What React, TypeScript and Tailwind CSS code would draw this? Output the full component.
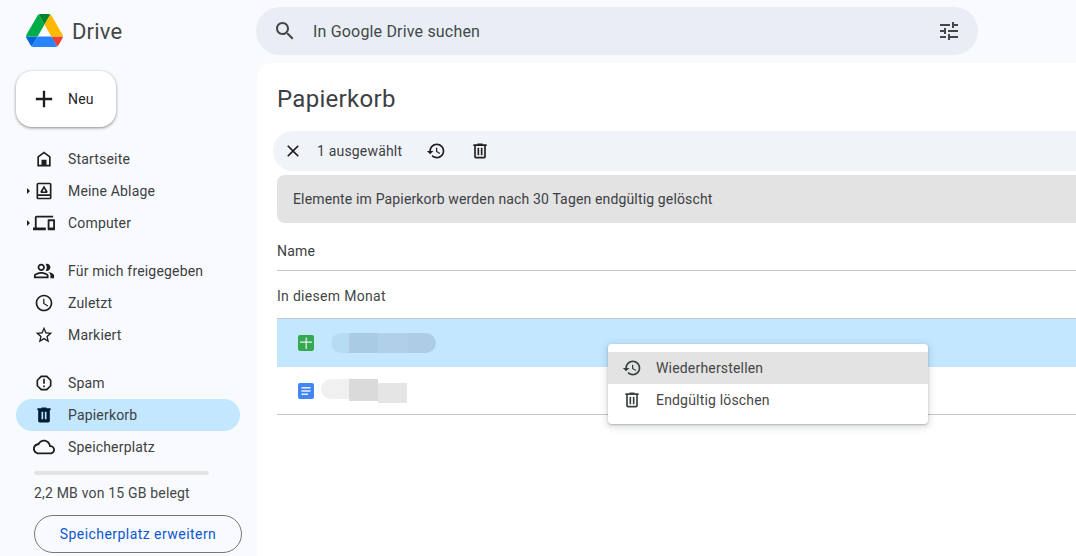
const icons = {
  search:
    "M15.5 14h-.79l-.28-.27C15.41 12.59 16 11.11 16 9.5 16 5.91 13.09 3 9.5 3S3 5.91 3 9.5 5.91 16 9.5 16c1.61 0 3.09-.59 4.23-1.57l.27.28v.79l5 4.99L20.49 19l-4.99-5zm-6 0C7.01 14 5 11.99 5 9.5S7.01 5 9.5 5 14 7.01 14 9.5 11.99 14 9.5 14z",
  tune: "M3 17v2h6v-2H3zM3 5v2h10V5H3zm10 16v-2h8v-2h-8v-2h-2v6h2zM7 9v2H3v2h4v2h2V9H7zm14 4v-2H11v2h10zm-6-4h2V7h4V5h-4V3h-2v6z",
  restore:
    "M13 3c-4.97 0-9 4.03-9 9H1l3.89 3.89.07.14L9 12H6c0-3.87 3.13-7 7-7s7 3.13 7 7-3.13 7-7 7c-1.93 0-3.68-.79-4.94-2.06l-1.42 1.42C8.27 19.99 10.51 21 13 21c4.97 0 9-4.03 9-9s-4.03-9-9-9zm-1 5v5l4.28 2.54.72-1.21-3.5-2.08V8H12z",
  trash:
    "M15 4V3H9v1H4v2h1v13c0 1.1.9 2 2 2h10c1.1 0 2-.9 2-2V6h1V4h-5zm2 15H7V6h10v13zM9 8h2v9H9zm4 0h2v9h-2z",
  trashFilled:
    "M15 4V3H9v1H4v2h1v13c0 1.1.9 2 2 2h10c1.1 0 2-.9 2-2V6h1V4h-5zm-4 13H9V8h2v9zm4 0h-2V8h2v9z",
  close:
    "M19 6.41L17.59 5 12 10.59 6.41 5 5 6.41 10.59 12 5 17.59 6.41 19 12 13.41 17.59 19 19 17.59 13.41 12z",
  add: "M19 13h-6v6h-2v-6H5v-2h6V5h2v6h6v2z",
  home: "M12 3L4 9v12h16V9l-8-6zm6 16H6v-9l6-4.5 6 4.5v9zM9 13h6v6H9z",
  drive:
    "M5 2h14a2 2 0 0 1 2 2v16a2 2 0 0 1-2 2H5a2 2 0 0 1-2-2V4a2 2 0 0 1 2-2zm0 2v12h14V4H5zm0 14v2h14v-2H5zM12 5.5l4.5 7.5-.9 1.5H8.4l-.9-1.5L12 5.5zm0 3.5-1.700 3.500h3.400L12 9z",
  devices:
    "M4 6h18V4H4c-1.1 0-2 .9-2 2v11H0v3h14v-3H4V6zm19 2h-6c-.55 0-1 .45-1 1v10c0 .55.45 1 1 1h6c.55 0 1-.45 1-1V9c0-.55-.45-1-1-1zm-1 9h-4v-7h4v7z",
  people:
    "M16.67 13.13C18.04 14.06 19 15.32 19 17v3h4v-3c0-2.18-3.57-3.47-6.33-3.87zM15 12c2.21 0 4-1.79 4-4s-1.79-4-4-4c-.47 0-.91.1-1.33.24C14.5 5.27 15 6.58 15 8s-.5 2.73-1.33 3.76c.42.14.86.24 1.33.24zM9 12c2.21 0 4-1.79 4-4s-1.79-4-4-4-4 1.79-4 4 1.79 4 4 4zm0-6c1.1 0 2 .9 2 2s-.9 2-2 2-2-.9-2-2 .9-2 2-2zM9 13c-2.67 0-8 1.34-8 4v3h16v-3c0-2.66-5.33-4-8-4zm6 5H3v-.99C3.2 16.29 6.3 15 9 15s5.8 1.29 6 2v1z",
  clock:
    "M11.99 2C6.47 2 2 6.48 2 12s4.47 10 9.99 10C17.52 22 22 17.52 22 12S17.52 2 11.990 2zM12 20c-4.42 0-8-3.58-8-8s3.58-8 8-8 8 3.58 8 8-3.58 8-8 8zm.5-13H11v6l5.25 3.15.75-1.23-4.500-2.67z",
  star: "M22 9.24l-7.19-.62L12 2 9.19 8.63 2 9.24l5.46 4.73L5.82 21 12 17.27 18.18 21l-1.63-7.03L22 9.24zM12 15.400l-3.76 2.27 1-4.28-3.32-2.88 4.38-.38L12 6.100l1.71 4.04 4.38.38-3.32 2.88 1 4.28L12 15.400z",
  spam: "M15.73 3H8.27L3 8.27v7.46L8.27 21h7.46L21 15.73V8.27L15.730 3zM19 14.900L14.900 19H9.100L5 14.900V9.100L9.100 5h5.800L19 9.100v5.800zM11 15h2v2h-2zm0-8h2v6h-2z",
  cloud:
    "M19.35 10.04C18.67 6.59 15.64 4 12 4 9.11 4 6.6 5.64 5.35 8.04 2.34 8.36 0 10.91 0 14c0 3.31 2.69 6 6 6h13c2.76 0 5-2.24 5-5 0-2.64-2.05-4.78-4.65-4.960zM19 18H6c-2.21 0-4-1.79-4-4 0-2.05 1.53-3.76 3.56-3.97l1.07-.11.5-.95C8.08 7.14 9.94 6 12 6c2.62 0 4.88 1.86 5.39 4.43l.3 1.5 1.53.11c1.56.1 2.78 1.41 2.78 2.96 0 1.65-1.35 3-3 3z",
};

function Icon({ d, className }: { d: string; className?: string }) {
  return (
    <svg viewBox="0 0 24 24" fill="currentColor" className={className}>
      <path d={d} />
    </svg>
  );
}

function DriveLogo() {
  return (
    <svg viewBox="0 0 87.3 78" className="h-[33px] w-[37px]">
      <path d="m6.6 66.85 3.85 6.65c.8 1.4 1.95 2.5 3.3 3.3l13.75-23.8h-27.5c0 1.55.4 3.1 1.2 4.5z" fill="#0066da" />
      <path d="m43.65 25-13.75-23.8c-1.35.8-2.5 1.9-3.3 3.3l-25.4 44a9.06 9.06 0 0 0 -1.2 4.5h27.5z" fill="#00ac47" />
      <path d="m73.55 76.8c1.35-.8 2.5-1.9 3.3-3.3l1.6-2.75 7.65-13.25c.8-1.4 1.2-2.95 1.2-4.5h-27.502l5.852 11.5z" fill="#ea4335" />
      <path d="m43.65 25 13.75-23.8c-1.35-.8-2.9-1.2-4.5-1.2h-18.5c-1.6 0-3.15.45-4.5 1.2z" fill="#00832d" />
      <path d="m59.8 53h-32.3l-13.75 23.8c1.35.8 2.9 1.2 4.5 1.2h50.8c1.6 0 3.15-.45 4.5-1.2z" fill="#2684fc" />
      <path d="m73.4 26.5-12.7-22c-.8-1.4-1.95-2.5-3.3-3.3l-13.75 23.8 16.15 28h27.45c0-1.55-.4-3.1-1.2-4.5z" fill="#ffba00" />
    </svg>
  );
}

function NavItem({
  icon,
  label,
  arrow,
  active,
  wide,
}: {
  icon: string;
  label: string;
  arrow?: boolean;
  active?: boolean;
  wide?: boolean;
}) {
  return (
    <div
      className={`flex h-8 w-[224px] items-center rounded-full ${active ? "bg-[#c2e7ff] text-[#001d35]" : "text-[#1f1f1f]"}`}
    >
      <div className="flex w-[14px] shrink-0 justify-end">
        {arrow ? (
          <span className="h-0 w-0 border-y-[3px] border-l-[3px] border-y-transparent border-l-[#1f1f1f]" />
        ) : null}
      </div>
      <div className="flex w-[28px] shrink-0 justify-center">
        <Icon d={icon} className={wide ? "h-[22px] w-[22px]" : "h-5 w-5"} />
      </div>
      <span className="ml-[10px] text-sm text-[#3c4043]">{label}</span>
    </div>
  );
}

function Sidebar() {
  return (
    <aside className="flex w-[257px] shrink-0 flex-col">
      <div className="flex h-[63px] items-center pb-[2px] pl-[26px]">
        <DriveLogo />
        <span className="mt-[2px] ml-[9px] text-[22px] text-[#444746]">Drive</span>
      </div>
      <div className="mt-2 ml-4 flex h-14 w-[100px] items-center rounded-2xl bg-white shadow-[0_1px_3px_1px_rgba(60,64,67,0.2),0_1px_2px_rgba(60,64,67,0.35)]">
        <Icon d={icons.add} className="ml-[14px] h-7 w-7 text-[#1f1f1f]" />
        <span className="ml-[10px] text-sm font-[450] text-[#1f1f1f]">Neu</span>
      </div>
      <nav className="mt-4 ml-4 flex flex-col">
        <NavItem icon={icons.home} label="Startseite" />
        <NavItem icon={icons.drive} label="Meine Ablage" arrow />
        <NavItem icon={icons.devices} label="Computer" arrow wide />
        <div className="h-4" />
        <NavItem icon={icons.people} label="Für mich freigegeben" wide />
        <NavItem icon={icons.clock} label="Zuletzt" />
        <NavItem icon={icons.star} label="Markiert" />
        <div className="h-4" />
        <NavItem icon={icons.spam} label="Spam" />
        <NavItem icon={icons.trashFilled} label="Papierkorb" active />
        <NavItem icon={icons.cloud} label="Speicherplatz" wide />
      </nav>
      <div className="mt-2 ml-[34px] h-1 w-[175px] rounded-full bg-[#e3e3e3]" />
      <div className="mt-2 ml-[34px] text-sm leading-5 text-[#444746]">2,2 MB von 15 GB belegt</div>
      <div className="mt-3 ml-[34px] flex h-[38px] w-[208px] items-center justify-center rounded-full border border-[#747775] text-sm font-[450] tracking-[0.45px] text-[#0b57d0]">
        Speicherplatz erweitern
      </div>
    </aside>
  );
}

function Toolbar() {
  return (
    <div className="ml-4 flex h-10 items-center rounded-l-full bg-[#f0f4f9] text-[#1f1f1f]">
      <Icon d={icons.close} className="ml-[10px] h-5 w-5" />
      <span className="ml-[14px] w-[85px] text-sm whitespace-nowrap text-[#3c4043]">1 ausgewählt</span>
      <Icon d={icons.restore} className="ml-[24px] h-5 w-5" />
      <Icon d={icons.trash} className="ml-[24px] h-5 w-5" />
    </div>
  );
}

function SheetIcon() {
  return (
    <svg viewBox="0 0 16 16" className="h-4 w-4 shrink-0">
      <rect width="16" height="16" rx="2" fill="#34a853" />
      <path d="M2 6.500h12v1.200H8.800V14H7.600V7.700H2z M7.600 2.500h1.200v4H7.600z" fill="#e6f4ea" />
    </svg>
  );
}

function DocIcon() {
  return (
    <svg viewBox="0 0 16 16" className="h-4 w-4 shrink-0">
      <rect width="16" height="16" rx="2" fill="#4285f4" />
      <path d="M3.500 4h9v1.500h-9zM3.500 7.200h9v1.500h-9zM3.500 10.400h6.500v1.500h-6.500z" fill="#e8f0fe" />
    </svg>
  );
}

function Main() {
  return (
    <main className="relative min-h-0 flex-1 overflow-hidden rounded-tl-2xl bg-white">
      <h1 className="ml-5 pt-[19px] text-2xl leading-[34px] tracking-[0.3px] text-[#3c4043]">Papierkorb</h1>
      <div className="mt-[15px]">
        <Toolbar />
      </div>
      <div className="mt-1 ml-5 flex h-12 items-center rounded-l-lg bg-[#e3e3e3] pl-4 text-sm tracking-[0.15px] text-[#3c4043]">
        Elemente im Papierkorb werden nach 30 Tagen endgültig gelöscht
      </div>
      <div className="ml-5 flex h-[48px] items-center border-b border-[#c4c7c5] pt-[8px] text-sm font-[450] text-[#3c4043]">
        Name
      </div>
      <div className="ml-5 flex h-12 items-center border-b border-[#c4c7c5] pt-[2px] text-sm tracking-[0.3px] text-[#444746]">
        In diesem Monat
      </div>
      <div className="ml-5">
        <div className="flex h-12 items-center bg-[#c2e7ff] pl-[21px]">
          <SheetIcon />
          <div className="ml-[17px] flex h-[20px] w-[105px] overflow-hidden rounded-full">
            <div className="w-[18px] bg-[#b6dcf3]" />
            <div className="w-[29px] bg-[#a9cbe3]" />
            <div className="w-[30px] bg-[#afd0e8]" />
            <div className="flex-1 bg-[#adcde6]" />
          </div>
        </div>
        <div className="flex h-12 items-center border-b border-[#c4c7c5] pl-[21px]">
          <DocIcon />
          <div className="ml-[7px] flex h-[24px] w-[86px] items-start">
            <div className="h-[20px] w-[28px] rounded-l-full bg-[#f0f0f0]" />
            <div className="h-[22px] w-[29px] bg-[#dadada]" />
            <div className="mt-[4px] h-[20px] w-[29px] bg-[#e5e5e5]" />
          </div>
        </div>
      </div>
      <div className="absolute top-[281px] left-[351px] w-[320px] rounded bg-white py-2 shadow-[0_2px_6px_2px_rgba(60,64,67,0.15),0_1px_2px_rgba(60,64,67,0.3)]">
        <div className="flex h-8 items-center bg-[#e3e3e3] pl-[14px] text-sm text-[#444746]">
          <Icon d={icons.restore} className="h-[20px] w-[20px] text-[#3c4043]" />
          <span className="ml-[14px]">Wiederherstellen</span>
        </div>
        <div className="flex h-8 items-center pl-[14px] text-sm text-[#444746]">
          <Icon d={icons.trash} className="h-[20px] w-[20px] text-[#3c4043]" />
          <span className="ml-[14px]">Endgültig löschen</span>
        </div>
      </div>
    </main>
  );
}

export default function App() {
  return (
    <div className="flex h-[556px] w-[1076px] overflow-hidden bg-[#f8fafd] font-['Roboto',sans-serif] tracking-[0.18px]">
      <Sidebar />
      <div className="flex min-w-0 flex-1 flex-col">
        <div className="flex h-[63px] shrink-0 items-start pt-[7px]">
          <div className="-ml-px flex h-12 w-[722px] items-center rounded-full bg-[#e9eef6] text-[#444746]">
            <Icon d={icons.search} className="ml-[17px] h-6 w-6" />
            <span className="ml-[16px] flex-1 pt-px text-base">In Google Drive suchen</span>
            <Icon d={icons.tune} className="mr-[17px] h-6 w-6" />
          </div>
        </div>
        <Main />
      </div>
    </div>
  );
}
